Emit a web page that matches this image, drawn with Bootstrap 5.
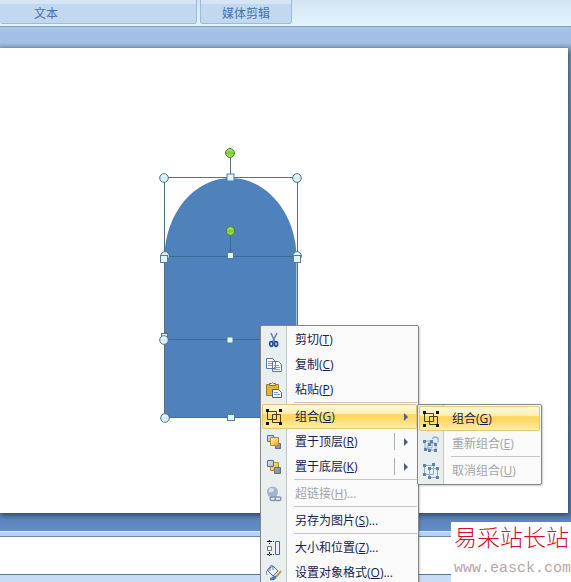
<!DOCTYPE html>
<html lang="zh-CN">
<head>
<meta charset="utf-8">
<meta name="viewport" content="width=device-width, initial-scale=1">
<title>组合形状</title>
<link href="https://cdn.jsdelivr.net/npm/bootstrap@5.3.0/dist/css/bootstrap.min.css" rel="stylesheet">
<style>
body{font-family:"Open Sans","Noto Sans CJK SC",sans-serif;font-size:12px;background:#a2bfe5}
.app-window{min-height:100vh;height:100vh}
.ribbon{height:27px;background:linear-gradient(#d3e4f3,#e2f4fd);border-bottom:1px solid #829fbd;gap:3px}
.ribbon-group{height:24px;padding-top:4px;border:1px solid #9dbbd8;border-top:0;border-radius:0 0 3px 3px;background:#d5e5f5}
.ribbon-label{height:19px;line-height:19px;background:#c1d8f0;color:#4a72a8;border-radius:0 0 2px 2px}
.group-text{width:197px;border-left:0}
.group-text .ribbon-label{padding-left:34px}
.group-media{width:92px}
.workspace{background:linear-gradient(#a9c8e4 0,#a3bfe8 6px,#a0c0e4 16px,#86a4c4 21px,#6e93bf 100px,#5880b5 calc(100% - 18px),#628dc6 100%);padding:21px 3px 18px 0;min-height:0}
.slide{background:#fff;box-shadow:1px 2px 5px #2c4360}
.splitter{height:6px;background:#b3d2f5;border-top:1px solid #dcecff;border-bottom:1px solid #6c8aa5}
.notes{height:37px;background:#fff}
.status{height:8px;background:#c9dcf5;border-top:1px solid #56788c}
.drawing{position:absolute;left:156px;top:96px}
.office-menu{--bs-dropdown-font-size:12px;--bs-dropdown-spacer:0;--bs-dropdown-border-radius:2px;--bs-dropdown-border-color:#868686;--bs-dropdown-min-width:0;--bs-dropdown-item-padding-x:0;--bs-dropdown-item-padding-y:0;padding:1px;background:linear-gradient(90deg,#e9eeee 25px,#c5c5c5 25px,#c5c5c5 26px,#fafafa 26px);box-shadow:1px 1px 2px #0003}
.context-menu{left:260px;top:325px;width:159px}
.sub-menu{left:155px;top:0;width:125px}
.office-menu .dropdown-item{height:25px;line-height:23px;border:1px solid transparent;border-radius:2px;color:#15224f;padding-left:3px;gap:13px}
.office-menu .dropdown-item:hover{background-color:#fff0b8}
.office-menu .dropdown-item.picked,.office-menu .dropdown-item.picked:hover{background:linear-gradient(#fffbe3 0,#ffedab 38%,#ffd65d 42%,#ffdb70 65%,#fff0a8 100%);border-color:#e3c47b}
.office-menu .dropdown-item:disabled{color:#a5a5a5}
.office-menu .dropdown-divider{height:1px;margin:0 0 1px 32px;border-top:1px solid #c5c5c5}
.office-menu svg{flex:none}
.menu-arrow{width:22px;height:17px;padding-left:9px;border-left:1px solid transparent}
.menu-arrow.split{border-left-color:#a7adba}
.menu-arrow::before{content:"";display:block;margin-top:5px;border:4px solid transparent;border-left-color:#4c607a;border-right:0}
.site-mark{position:absolute;right:0;bottom:0;width:120px;height:60px;padding-left:3px;background:#fff}
.site-name{font-family:"Noto Sans CJK SC",sans-serif;font-weight:300;font-size:23px;line-height:28px;color:#d0102c}
.site-url{font-family:"Liberation Mono",monospace;font-size:15px;line-height:18px;margin-top:10px;color:#b5a6a9}
</style>
<script src="https://cdn.jsdelivr.net/npm/bootstrap@5.3.0/dist/js/bootstrap.bundle.min.js"></script>
</head>
<body>
<svg width="0" height="0" class="position-absolute" aria-hidden="true">
<defs>
<linearGradient id="gold" x2="1" y2="1"><stop stop-color="#fff1ae"/><stop offset="1" stop-color="#e9a52c"/></linearGradient>
<linearGradient id="grey" x2="1" y2="1"><stop stop-color="#dfe4ec"/><stop offset="1" stop-color="#77849a"/></linearGradient>
<symbol id="i-group" viewBox="0 0 16 16"><path d="M1.500 2.500h9v8h-9zM6.500 5.500h8v8h-8z" fill="none" stroke="#4a3c14"/><path d="M0 0h3v3H0zM13 0h3v3h-3zM0 13h3v3H0zM13 13h3v3h-3z" fill="#1b0e06"/></symbol>
</defs>
</svg>
<div class="app-window d-flex flex-column position-relative overflow-hidden">
  <header class="ribbon d-flex flex-shrink-0">
    <section class="ribbon-group group-text"><div class="ribbon-label">文本</div></section>
    <section class="ribbon-group group-media"><div class="ribbon-label text-center">媒体剪辑</div></section>
  </header>
  <main class="workspace d-flex flex-grow-1"><div class="slide flex-grow-1"></div></main>
  <div class="splitter flex-shrink-0"></div>
  <div class="notes flex-shrink-0"></div>
  <footer class="status flex-shrink-0"></footer>

  <svg class="drawing" width="150" height="330" viewBox="156 96 150 330" role="img" aria-label="椭圆和矩形">
    <defs>
      <linearGradient id="knob" x2="0" y2="1"><stop stop-color="#fff"/><stop offset=".5" stop-color="#cdeaf4"/><stop offset="1" stop-color="#f2fcff"/></linearGradient>
      <linearGradient id="green" x2="0" y2="1"><stop stop-color="#b6ee78"/><stop offset=".5" stop-color="#79c73a"/><stop offset="1" stop-color="#a9ef5e"/></linearGradient>
    </defs>
    <path d="M164.500 417V258C164.500 214 194 178 230.500 178S296.500 214 296.500 258V417z" fill="#4f81bb"/>
    <g fill="none" stroke="#53717f"><path d="M164.500 177.500h133v162M164.500 177.500V418M164.500 417.500h133V258M230.500 154v23"/><path d="M164 256.500h133M164 339.500h133M230.500 232v22" stroke="#3b6a98"/></g>
    <g fill="url(#knob)" stroke="#4c7080"><circle cx="164" cy="178" r="4.300"/><circle cx="297" cy="178" r="4.300"/><circle cx="165" cy="256" r="4.300"/><circle cx="297" cy="256" r="4.300"/><rect x="161.500" y="333.500" width="6" height="6"/><circle cx="164" cy="340" r="4.300"/><circle cx="165" cy="418" r="4.300"/></g>
    <g fill="#e0f5fc" stroke="#527f9d"><rect x="227" y="174" width="7" height="7"/><rect x="160.500" y="255.500" width="7" height="7"/><rect x="293.500" y="255.500" width="7" height="7"/><rect x="227.500" y="252.500" width="6" height="6"/><rect x="227" y="337" width="6" height="6"/><rect x="227.500" y="414.500" width="7" height="6"/></g>
    <g fill="url(#green)" stroke="#477d2c"><circle cx="230" cy="153" r="4.500"/><circle cx="230.500" cy="231" r="4.300"/></g>
  </svg>

  <ul class="dropdown-menu show office-menu context-menu">
    <li><button type="button" class="dropdown-item d-flex align-items-center"><svg width="16" height="16" viewBox="0 0 16 16"><path d="M5 1l4 9M11 1L6.500 10" fill="none" stroke="#6685b8" stroke-width="1.600"/><g fill="none" stroke="#244b96" stroke-width="1.700"><ellipse cx="5.300" cy="12" rx="1.600" ry="2.300"/><ellipse cx="10" cy="12" rx="1.600" ry="2.300"/></g></svg><span>剪切(<u>T</u>)</span></button></li>
    <li><button type="button" class="dropdown-item d-flex align-items-center"><svg width="16" height="16" viewBox="0 0 16 16"><g fill="#fff" stroke="#5878ad"><path d="M.5 1.500h6l3 3v7h-9zM6.500 4.500h6l3 3v7h-9z"/><path d="M2 4.500h4M2 6.500h4M2 8.500h4M8 8.500h5M8 10.500h6M8 12.500h6" stroke="#7fa3d9"/></g></svg><span>复制(<u>C</u>)</span></button></li>
    <li><button type="button" class="dropdown-item d-flex align-items-center"><svg width="16" height="16" viewBox="0 0 16 16"><path d="M.5 2.500h12v11H.5z" fill="#e2b436" stroke="#a37924"/><path d="M3.500 3.500v-2h2l1-1 1 1h2v2z" fill="#eee4bd" stroke="#83713c"/><path d="M6.500 7.500h6l3 3v5h-9z" fill="#fff" stroke="#496492"/><path d="M8 10.500h4M8 12.500h6" stroke="#7295cc"/></svg><span>粘贴(<u>P</u>)</span></button></li>
    <li><hr class="dropdown-divider"></li>
    <li class="position-relative"><button type="button" class="dropdown-item picked d-flex align-items-center" aria-expanded="true"><svg width="16" height="16"><use href="#i-group"/></svg><span>组合(<u>G</u>)</span><i class="menu-arrow ms-auto"></i></button>
      <ul class="dropdown-menu show office-menu sub-menu">
        <li><button type="button" class="dropdown-item picked d-flex align-items-center"><svg width="16" height="16"><use href="#i-group"/></svg><span>组合(<u>G</u>)</span></button></li>
        <li><button type="button" class="dropdown-item d-flex align-items-center" disabled><svg width="16" height="16" viewBox="0 0 16 16"><path d="M2 5h7v7H2zM5 7h8v7H5z" fill="none" stroke="#91a9c6"/><path d="M0 4h3v3H0zM7 4h3v3H7zM1 12h3v3H1zM5 7h3v3H5zM11 7h3v3h-3zM5 13h3v3H5zM11 13h3v3h-3z" fill="#617fa8"/><path d="M9.500 3c1-3 6-2.500 6 1.500v2" fill="none" stroke="#9bb9dc" stroke-width="2"/></svg><span>重新组合(<u>E</u>)</span></button></li>
        <li><hr class="dropdown-divider"></li>
        <li><button type="button" class="dropdown-item d-flex align-items-center" disabled><svg width="16" height="16" viewBox="0 0 16 16"><path d="M1.500 2.500h9v9h-9zM6.500 5.500h8v9h-8z" fill="none" stroke="#91a9c6"/><path d="M0 1h3v3H0zM9 0h3v3H9zM0 10h3v3H0zM5 4h3v3H5zM13 4h3v3h-3zM5 13h3v3H5zM13 13h3v3h-3z" fill="#617fa8"/></svg><span>取消组合(<u>U</u>)</span></button></li>
      </ul>
    </li>
    <li><button type="button" class="dropdown-item d-flex align-items-center"><svg width="16" height="16" viewBox="0 0 16 16"><path d="M1.500 1.500h6v6h-6zM9.500 9.500h5v5h-5z" fill="url(#grey)" stroke="#606d80"/><path d="M4.500 3.500h8v8h-8z" fill="url(#gold)" stroke="#b4862e"/></svg><span>置于顶层(<u>R</u>)</span><i class="menu-arrow split ms-auto"></i></button></li>
    <li><button type="button" class="dropdown-item d-flex align-items-center"><svg width="16" height="16" viewBox="0 0 16 16"><path d="M4.500 3.500h8v8h-8z" fill="url(#gold)" stroke="#b4862e"/><path d="M1.500 1.500h6v6h-6zM8.500 8.500h6v6h-6z" fill="url(#grey)" stroke="#606d80"/></svg><span>置于底层(<u>K</u>)</span><i class="menu-arrow split ms-auto"></i></button></li>
    <li><hr class="dropdown-divider"></li>
    <li><button type="button" class="dropdown-item d-flex align-items-center" disabled><svg width="16" height="16" viewBox="0 0 16 16"><circle cx="6.500" cy="6" r="5.500" fill="#a5b2cb"/><path d="M3 3c2-2 5-1 5 1S5 7 3 6z" fill="#d9e0ed"/><g fill="#e9eeee" stroke="#8293b2" stroke-width="1.400"><rect x="4" y="11" width="6" height="3.500" rx="1.700"/><rect x="9" y="11" width="6" height="3.500" rx="1.700"/></g></svg><span>超链接(<u>H</u>)...</span></button></li>
    <li><hr class="dropdown-divider"></li>
    <li><button type="button" class="dropdown-item d-flex align-items-center"><svg width="16" height="16"></svg><span>另存为图片(<u>S</u>)...</span></button></li>
    <li><hr class="dropdown-divider"></li>
    <li><button type="button" class="dropdown-item d-flex align-items-center"><svg width="16" height="16" viewBox="0 0 16 16"><path d="M1 1.500h7M3.500 0v4M1 14.500h7M3.500 12v4" stroke="#111" stroke-dasharray="2 1"/><path d="M1.500 6.500h4v4h-4z" fill="#fff" stroke="#777"/><path d="M9.500 1.500h4v13h-4z" fill="#e9f0fb" stroke="#49678f"/></svg><span>大小和位置(<u>Z</u>)...</span></button></li>
    <li><button type="button" class="dropdown-item d-flex align-items-center"><svg width="16" height="16" viewBox="0 0 16 16"><path d="M2 4l5-3 5 5-5 5-5-5z" fill="#eef5fc" stroke="#4c698e"/><path d="M4 6V1.500C4 0 7 0 7 1.500V5M2 5C0 6 0 8 1 10" fill="none" stroke="#567fb3"/><path d="M15 6l-5 6" stroke="#c79a45" stroke-width="2"/><path d="M4 13c3 0 3-3 6-2 1 3-2 5-6 4z" fill="#4778b7"/></svg><span>设置对象格式(<u>O</u>)...</span></button></li>
  </ul>

  <aside class="site-mark"><div class="site-name text-nowrap">易采站长站</div><div class="site-url">www.easck.com</div></aside>
</div>
</body>
</html>
